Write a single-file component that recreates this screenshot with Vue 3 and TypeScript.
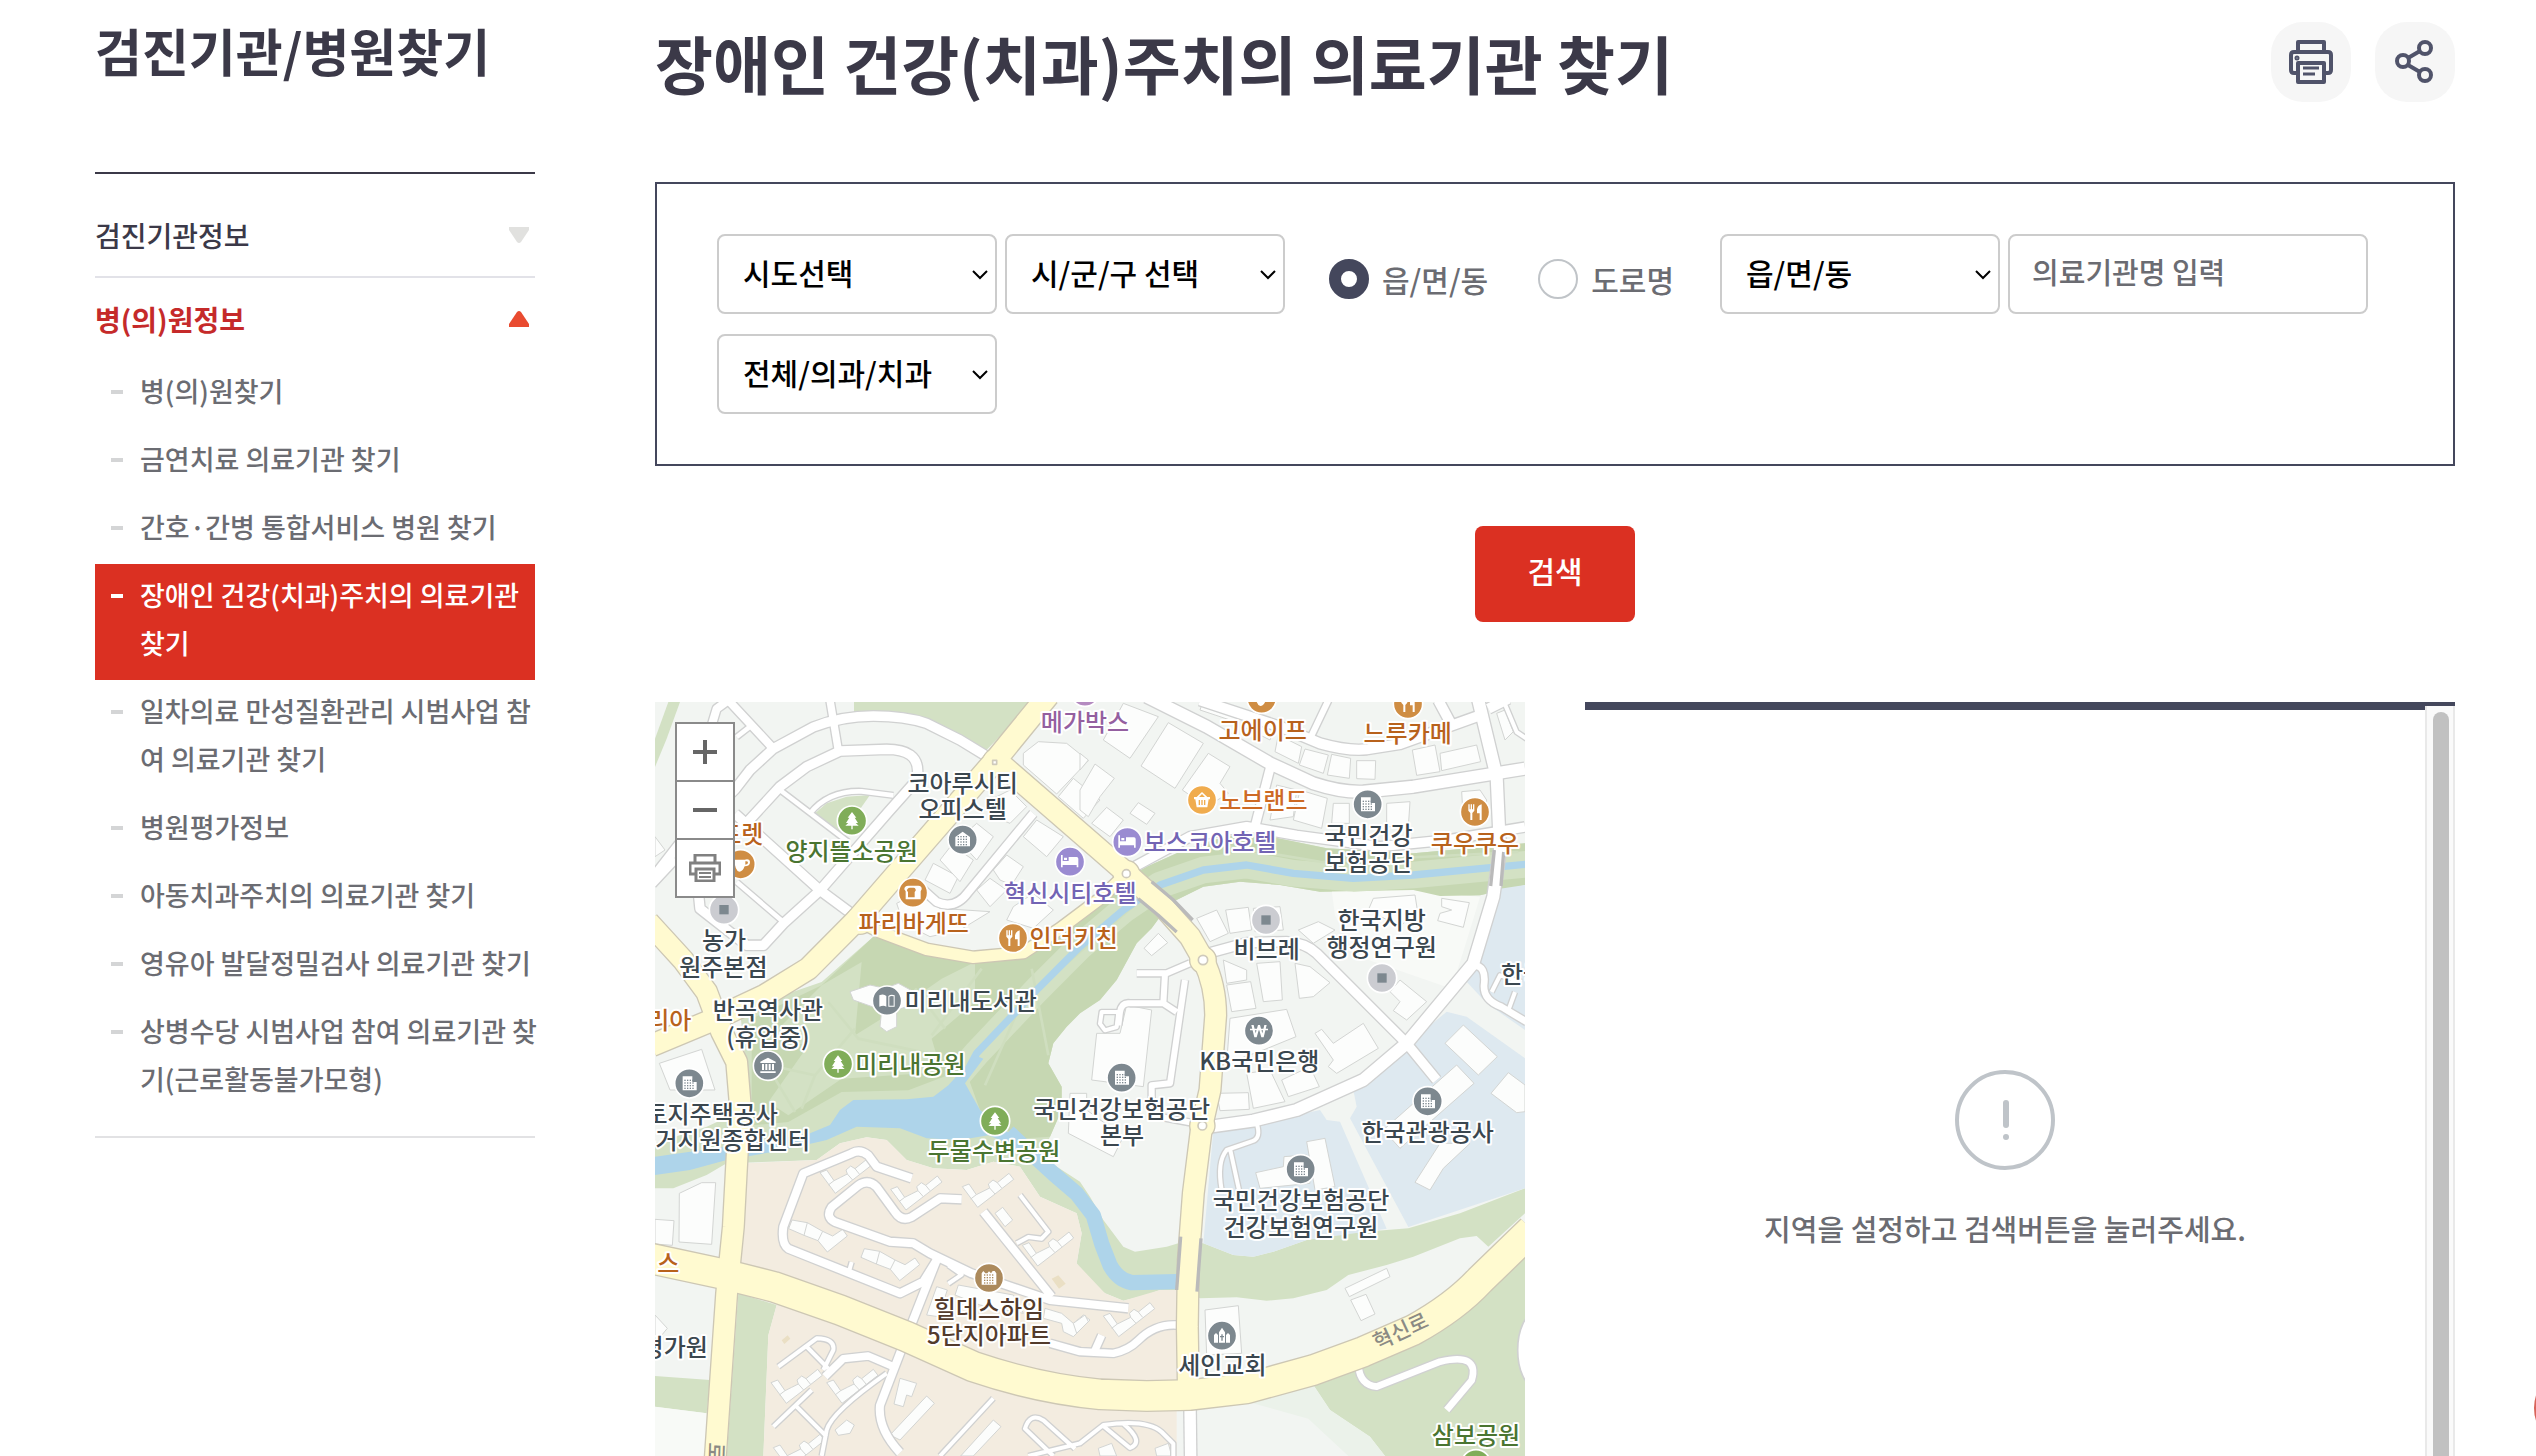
<script setup lang="ts">
import { ref } from 'vue'

interface MenuItem { label: string; active?: boolean }
interface Road { d: string; w: number }
interface Label { t: string; x: number; y: number; c: string; a?: 'start' | 'middle' }
interface Pin { k: string; x: number; y: number; c: string }
interface Block { x: number; y: number; shapes: string[] }

const menu: MenuItem[] = [
  { label: '병(의)원찾기' },
  { label: '금연치료 의료기관 찾기' },
  { label: '간호·간병 통합서비스 병원 찾기' },
  { label: '장애인 건강(치과)주치의 의료기관 찾기', active: true },
  { label: '일차의료 만성질환관리 시범사업 참여 의료기관 찾기' },
  { label: '병원평가정보' },
  { label: '아동치과주치의 의료기관 찾기' },
  { label: '영유아 발달정밀검사 의료기관 찾기' },
  { label: '상병수당 시범사업 참여 의료기관 찾기(근로활동불가모형)' },
]

const addressType = ref('dong')
const keyword = ref('')

const whiteRoads: Road[] = [
  { w: 28, d: 'M0 520L70 430L240 262L285 204L355 140L475 75Q560 42 655 42T815 64L915 114L1005 169' },
  { w: 28, d: 'M-10 545L60 470M250 390L375 254L455 194L555 147L695 142Q790 142 788 210L780 240L700 330L495 565L385 665L325 730H275L135 620L130 570' },
  { w: 22, d: 'M525 -5L550 145' },
  { w: 24, d: 'M170 70L185 20L220 -5L355 140' },
  { w: 14, d: 'M285 74L245 105M245 540L385 660' },
  { w: 28, d: 'M240 335L495 565L610 650' },
  { w: 14, d: 'M375 264L580 420M465 334Q520 265 620 268L715 280' },
  { w: 24, d: 'M1135 334L940 570Q900 625 845 600L795 555' },
  { w: 36, d: 'M1475 -16L1655 74L1845 184L1975 244Q2060 272 2125 269L2275 254L2610 200' },
  { w: 30, d: 'M1635 -5L1875 74L1995 124Q2080 148 2135 142L2235 126L2475 40' },
  { w: 18, d: 'M1970 100L2020 -5' },
  { w: 30, d: 'M2350 -5L2385 60M2500 20L2560 -10' },
  { w: 12, d: 'M2545 -5L2585 90L2615 110' },
  { w: 36, d: 'M2470 -5L2525 224L2535 444L2515 584L2455 784L2255 1024L2125 1134L1925 1224L1795 1256L1665 1274' },
  { w: 26, d: 'M1845 200L1800 374' },
  { w: 28, d: 'M1435 496L1605 404L1775 374L1925 400L2175 434L2375 414L2610 375' },
  { w: 28, d: 'M1665 752L1775 722L1895 719Q1950 722 1985 754L2255 1024L2345 1134' },
  { w: 18, d: 'M1605 784L1535 814H1445M1530 814L1525 904H1425Q1400 900 1395 930L1390 970M1525 904L1565 930M1590 834L1545 1144L1490 1150L1490 1240L1610 1262' },
  { w: 12, d: 'M1340 930H1390L1385 975L1350 985L1335 965ZM2510 870L2535 820L2600 840M2560 925L2580 870' },
  { w: 20, d: 'M2455 790Q2495 790 2487 850Q2485 895 2540 915L2615 960' },
  { w: 12, d: 'M1805 1264Q1820 1310 1790 1318L1715 1344Q1685 1380 1700 1464M1725 1340L1752 1464' },
  { w: 24, d: 'M770 1429L665 1394L640 1360Q615 1340 590 1354L445 1414L385 1574Q378 1625 400 1640L735 1774L805 1739L845 1674' },
  { w: 24, d: 'M920 1492L855 1489L770 1545Q740 1560 720 1530L665 1455Q640 1430 610 1450L530 1515Q510 1545 540 1560L705 1619L775 1624L825 1654L950 1714L1185 1794L1420 1819' },
  { w: 24, d: 'M845 1674L735 1954L675 2110Q668 2180 735 2252' },
  { w: 24, d: 'M985 1529L1190 1784' },
  { w: 12, d: 'M1095 1479L1180 1589L1160 1610L1120 1605L1085 1624M590 1680L580 1715M880 1690L920 1718L880 1745' },
  { w: 22, d: 'M510 2024L565 1970L640 1962L715 1994' },
  { w: 12, d: 'M370 1994L485 1909Q540 1910 535 1944L505 2004M455 1934L520 2000M695 2014Q530 2130 515 2184L500 2262M355 2174L470 2064M425 2114L515 2204M855 2262L1015 2089' },
  { w: 22, d: 'M1185 1924L1275 1949L1375 1954Q1420 1945 1450 1915Q1500 1865 1565 1869M1320 1945L1340 1900' },
  { w: 12, d: 'M1120 2262L1275 2224L1345 2169Q1475 2150 1520 2190L1555 2225V2262M1345 2172L1425 2238Q1470 2220 1405 2165M1195 2262L1110 2180Q1125 2130 1165 2155L1260 2240' },
  { w: 34, d: 'M1605 2110L1607 2270' },
  { w: 20, d: 'M2110 1990Q2115 2050 2165 2054L2355 1979Q2475 1950 2450 2035L2375 2124' },
]

const yellowRoads: Road[] = [
  { w: 64, d: 'M1180 -20L1025 170L605 654L460 800L330 880L170 955L-10 1030' },
  { w: 34, d: 'M605 654L675 690L815 742L955 766L1105 752L1215 680L1335 590L1415 514' },
  { w: 62, d: 'M1025 175L1335 444L1415 514L1525 614L1605 704L1645 774Q1682 850 1682 940L1665 1164L1640 1274L1615 1474L1600 1674L1597 1874L1600 2060' },
  { w: 62, d: 'M-20 660L85 775L155 870L200 990L245 1080L255 1200L235 1574L215 1774L180 2280' },
  { w: 88, d: 'M-20 1668L195 1714L355 1754L555 1824L755 1904L955 1994Q1150 2060 1335 2077L1475 2082L1605 2079L1775 2059L1975 2004L2125 1949L2275 1884Q2400 1815 2475 1734L2630 1584' },
]

const blocks: Block[] = [
  { x: -45, y: -36, shapes: [
    '1150,190 1195,155 1280,160 1345,212 1250,312 1150,225', '1255,320 1300,265 1380,330 1330,385',
    '855,570 880,520 955,560 930,610', '900,510 935,465 1000,510 960,575', '955,450 1010,400 1060,440 1010,510',
    '1050,330 1110,300 1160,350 1110,400 1060,380', '1060,540 1100,495 1150,530 1115,585 1080,570',
    '1010,600 1050,565 1100,600 1050,650', '1150,440 1190,390 1270,440 1220,500', '1100,690 1120,650 1180,610 1240,660 1180,715',
    '770,640 830,610 900,655 1050,665 960,720 870,740 790,700', '58,1120 185,1078 225,1200 90,1200', '45,440 75,480 45,500',
    '630,905 690,885 735,895 775,880 830,910 830,940 770,960 770,1010 740,1025 720,1010 725,960 640,930',
  ] },
  { x: 1275, y: -36, shapes: [
    '70,150 130,40 235,80 150,205', '265,98 370,160 285,295 183,228', '385,190 450,230 420,280 445,310 380,350 307,300',
    '370,30 480,75 465,95 360,60', '500,80 580,120 570,150 490,110', '595,135 665,170 655,220 585,185',
    '675,177 745,195 730,250 658,225', '755,193 812,205 808,265 742,255', '830,212 887,212 885,268 830,266',
    '997,180 1065,165 1080,245 1010,256', '1080,190 1190,165 1202,215 1085,242', '1250,70 1275,60 1300,125 1275,150',
    '150,370 175,338 225,370 200,403', '35,400 80,352 130,390 90,440', '0,190 25,210 0,240',
    '0,300 45,222 103,265 60,320 25,380 0,360', '590,285 650,300 640,380 570,390', '660,300 742,325 725,415 640,390',
    '760,340 808,340 808,400 755,400', '920,340 990,335 985,410 920,410', '1145,305 1200,300 1220,330 1215,395 1150,390',
    '880,625 1005,615 1012,660 960,710 865,660', '1085,625 1168,638 1150,712 1073,692 1080,670 1115,660 1085,650',
    '350,685 410,660 445,730 390,755', '437,660 505,652 515,720 450,730', '520,655 600,650 610,720 525,725',
    '655,720 715,695 765,720 700,760', '192,775 235,730 263,758 215,797', '430,810 500,840 500,870 440,880',
    '440,885 512,875 528,955 455,965', '530,820 600,815 607,930 550,935', '645,820 690,830 750,878 700,920 658,925',
    '450,985 620,958 648,1040 550,1080 440,1120', '705,1030 725,1018 760,1060 850,1000 895,1075 770,1150 745,1130 760,1110',
    '960,870 1040,935 980,990 940,962 960,935 930,905', '1150,1005 1252,1100 1195,1155 1095,1060',
    '140,945 215,960 190,1190 35,1170 50,1030 120,1030',
  ] },
  { x: -45, y: 1074, shapes: [
    '118,400 185,368 227,368 215,553 117,546', '45,478 102,482 97,556 45,552', '45,765 82,805 45,850',
    '780,955 830,970 815,1010 800,1005 790,1040 762,1032', '585,1110 620,1080 643,1095 630,1120 595,1126',
    '1065,460 1088,442 1118,480 1095,500', '860,765 890,680 922,690 895,770', '955,675 1120,705 1150,760 1020,735 945,705',
    '750,1125 860,1008 883,1030 780,1140', '962,1188 1060,1080 1083,1100 1000,1188', '1215,745 1265,760 1300,790 1330,765 1350,780 1300,830 1270,815 1265,790 1210,775',
  ] },
  { x: 1275, y: 1074, shapes: [
    '1130,15 1182,70 960,265 910,210', '1285,38 1335,75 1335,155 1310,158 1233,100', '1080,250 1170,250 1090,325 1050,390 1005,367',
    '680,245 735,235 765,380 705,390', '527,338 610,320 612,290 680,285 690,370 540,385', '410,100 505,98 508,148 420,152',
    '500,40 570,30 615,125 520,145', '605,60 690,20 718,80 625,110', '795,685 920,625 930,650 808,710',
    '812,720 858,703 885,762 843,782', '375,750 475,737 485,880 380,885', '-30,100 20,100 20,150 130,230 100,290 -35,220',
    '55,1165 95,1150 110,1188 60,1188', '225,1165 265,1150 275,1188 230,1188', '-20,790 15,765 25,785 -10,820',
  ] },
]

const clusters: [number, number][] = [
  [495, 1404], [707, 1454], [922, 1446], [1102, 1622], [348, 2034], [515, 2034], [355, 2229], [1345, 1834],
]
const terraces: [number, number][] = [[405, 1554], [622, 1640]]

const ink = '#3b474f'
const leaf = '#4a7531'
const rust = '#b8621c'
const plum = '#7264b4'

const labels: Label[] = [
  { t: '메가박스', x: 1290, y: 61, c: '#945fa0' },
  { t: '코아루시티', x: 923, y: 246, c: ink }, { t: '오피스텔', x: 923, y: 324, c: ink },
  { t: '양지뜰소공원', x: 590, y: 449, c: leaf }, { t: '드렛', x: 259, y: 399, c: rust },
  { t: '파리바게뜨', x: 776, y: 664, c: rust }, { t: '혁신시티호텔', x: 1246, y: 574, c: plum },
  { t: '인더키친', x: 1256, y: 711, c: rust }, { t: '농가', x: 207, y: 716, c: ink },
  { t: '원주본점', x: 205, y: 796, c: ink }, { t: '반곡역사관', x: 339, y: 926, c: ink },
  { t: '(휴업중)', x: 339, y: 1006, c: ink }, { t: '리아', x: 43, y: 956, c: rust },
  { t: '미리내도서관', x: 947, y: 899, c: ink }, { t: '미리내공원', x: 766, y: 1088, c: leaf },
  { t: '토지주택공사', x: 170, y: 1237, c: ink }, { t: '주거지원종합센터', x: 200, y: 1317, c: ink },
  { t: '두물수변공원', x: 1017, y: 1349, c: leaf }, { t: '국민건강보험공단', x: 1400, y: 1222, c: ink },
  { t: '본부', x: 1401, y: 1301, c: ink }, { t: '스', x: 40, y: 1686, c: rust },
  { t: '힐데스하임', x: 1002, y: 1822, c: '#533b2c' }, { t: '5단지아파트', x: 1002, y: 1902, c: '#533b2c' },
  { t: '평가원', x: 59, y: 1936, c: ink }, { t: '고에이프', x: 1823, y: 86, c: rust },
  { t: '느루카메', x: 2258, y: 96, c: rust }, { t: '노브랜드', x: 1825, y: 296, c: '#cd6a25' },
  { t: '보스코아호텔', x: 1665, y: 421, c: plum }, { t: '국민건강', x: 2140, y: 402, c: ink },
  { t: '보험공단', x: 2140, y: 481, c: ink }, { t: '쿠우쿠우', x: 2460, y: 424, c: rust },
  { t: '비브레', x: 1835, y: 744, c: ink }, { t: '한국지방', x: 2180, y: 657, c: ink },
  { t: '행정연구원', x: 2180, y: 737, c: ink }, { t: '한국', x: 2538, y: 819, c: ink, a: 'start' },
  { t: 'KB국민은행', x: 1813, y: 1079, c: ink }, { t: '국민건강보험공단', x: 1938, y: 1497, c: ink },
  { t: '건강보험연구원', x: 1938, y: 1576, c: ink }, { t: '한국관광공사', x: 2318, y: 1292, c: ink },
  { t: '세인교회', x: 1702, y: 1991, c: ink }, { t: '삼보공원', x: 2463, y: 2201, c: leaf },
]

const slate = '#7d888f'
const pins: Pin[] = [
  { k: 'tree', x: 591, y: 356, c: '#80ad59' }, { k: 'tree', x: 549, y: 1086, c: '#80ad59' },
  { k: 'tree', x: 1020, y: 1257, c: '#80ad59' }, { k: 'tree', x: 2463, y: 2287, c: '#80ad59' },
  { k: 'house', x: 923, y: 413, c: slate }, { k: 'office', x: 2138, y: 307, c: slate },
  { k: 'office', x: 103, y: 1144, c: slate }, { k: 'office', x: 1400, y: 1127, c: slate },
  { k: 'office', x: 2318, y: 1198, c: slate }, { k: 'office', x: 1937, y: 1402, c: slate },
  { k: 'bed', x: 1245, y: 479, c: '#9a8bd1' }, { k: 'bed', x: 1417, y: 420, c: '#9a8bd1' },
  { k: 'bread', x: 774, y: 572, c: '#cf8d43' }, { k: 'fork', x: 1074, y: 708, c: '#cf8d43' },
  { k: 'fork', x: 2460, y: 330, c: '#cf8d43' }, { k: 'fork', x: 2259, y: 6, c: '#cf8d43' },
  { k: 'cup', x: 257, y: 487, c: '#cf8d43' }, { k: 'cup', x: 1820, y: -10, c: '#cf8d43' },
  { k: 'none', x: 1290, y: -31, c: '#b48bc0' }, { k: 'dot', x: 207, y: 623, c: '#cbccd1' },
  { k: 'dot', x: 1833, y: 654, c: '#cbccd1' }, { k: 'dot', x: 2181, y: 828, c: '#cbccd1' },
  { k: 'book', x: 696, y: 896, c: slate }, { k: 'museum', x: 339, y: 1091, c: slate },
  { k: 'basket', x: 1641, y: 294, c: '#f0ac4e' }, { k: 'won', x: 1812, y: 986, c: slate },
  { k: 'apartment', x: 1002, y: 1728, c: '#ac8a5c' }, { k: 'church', x: 1701, y: 1901, c: slate },
]

const glyphs: Record<string, string> = {
  none: '',
  dot: '',
  tree: 'M0-26L13-9H8L18 7H11L20 15H2V26H-2V15H-20L-11 7H-18L-8-9H-13Z',
  house: 'M0-24L22-8V20H-22V-8Z',
  office: 'M-20-21H9V-4H22V21H-20Z',
  bed: 'M-27-20H-22V-2H-4V-14H20Q25-14 25-9V17H20V10H-22V17H-27ZM-18-12H-9V-5H-18Z',
  bread: 'M-14-21H16Q27-21 26-10L23-4V20H-22V-4L-26-10Q-26-21-14-21Z',
  fork: 'M-20-23H-16V-8H-13V-23H-9V-8H-6V-23H-2V-4L-8 3V24H-14V3L-20-4ZM20-23V24H14V4H6V-8Q8-20 20-23Z',
  cup: 'M-18-14H12Q28-18 28-6Q28 6 12 6Q6 22-4 22Q-18 18-18-14ZM14-9V1Q22 0 22-5T14-9Z',
  book: 'M-23-16Q-10-22-2-14V18Q-10 12-23 18ZM23-16V18H4V-14Q12-20 23-16ZM7-12V15H20V-13Q12-16 7-12Z',
  museum: 'M0-24L23-12V-8H-23V-12ZM-18-5H-12V13H-18ZM-8-5H-2V13H-8ZM2-5H8V13H2ZM12-5H18V13H12ZM-23 17H23V22H-23Z',
  basket: 'M-24-9H-16L0-24L16-9H24V-2H20L16 22H-16L-20-2H-24ZM-9-9H9L0-18ZM-10 0H-6V15H-10ZM-2 0H2V15H-2ZM6 0H10V15H6Z',
  won: 'M-23-17H-16L-10 8L-3-17H3L10 8L16-17H23L14 20H7L0-4L-7 20H-14ZM-27-6H27V-1H-27Z',
  apartment: 'M-22-14L-17-21L-11-14L-5-14L0-20L6-14L11-21L17-21L22-14V20H-22Z',
  church: 'M0-24L9-10V21H-9V-10ZM-24-2L-18-8L-12-2V21H-24ZM12-2L18-8L24-2V21H12ZM-2-4V1H-6V5H-2V15H2V5H6V1H2V-4Z',
}
const windowed = ['house', 'office', 'apartment']
const windowDots: [number, number][] = []
for (const y of [-11, -3, 5, 13]) for (const x of [-15, -7, 1, 9]) windowDots.push([x, y])
</script>

<template>
  <div class="page">
    <aside class="side">
      <h2 class="side-title">검진기관/병원찾기</h2>
      <nav class="side-nav">
        <a href="#" class="group">검진기관정보
          <svg class="tri" viewBox="0 0 20 16" aria-hidden="true"><path d="M0 0H20V3L12 15Q10 17 8 15L0 3Z" fill="#e1e1df" /></svg>
        </a>
        <a href="#" class="group open">병(의)원정보
          <svg class="tri" viewBox="0 0 20 16" aria-hidden="true"><path d="M0 16H20V13L12 1Q10-1 8 1L0 13Z" fill="#e94b30" /></svg>
        </a>
        <ul class="sub">
          <li v-for="m in menu" :key="m.label">
            <a href="#" class="sub-link" :class="{ active: m.active }"><span>{{ m.label }}</span></a>
          </li>
        </ul>
      </nav>
    </aside>

    <main class="main">
      <header class="head">
        <h1 class="title">장애인 건강(치과)주치의 의료기관 찾기</h1>
        <div class="tools">
          <button type="button" class="tool" aria-label="인쇄">
            <svg width="44" height="44" viewBox="0 0 44 44" fill="none" stroke="#50536a" stroke-width="4" stroke-linejoin="round">
              <path d="M9 12V2H35V12M9 33H5Q2 33 2 30V15Q2 12 5 12H39Q42 12 42 15V30Q42 33 39 33H35M9 23H35V42H9Z" />
              <path d="M14 28H30M14 34H26" stroke-width="3" /><circle cx="8" cy="18" r="1" stroke-width="3" />
            </svg>
          </button>
          <button type="button" class="tool" aria-label="공유">
            <svg width="44" height="44" viewBox="0 0 44 44" fill="none" stroke="#50536a" stroke-width="4">
              <circle cx="10" cy="21" r="6" /><circle cx="32" cy="8" r="6" /><circle cx="32" cy="35" r="6" />
              <path d="M15 18L27 11M15 25L27 32" />
            </svg>
          </button>
        </div>
      </header>

      <form class="search" @submit.prevent>
        <div class="filters">
          <div class="pick">
            <select aria-label="시도"><option>시도선택</option></select>
            <svg viewBox="0 0 16 10" aria-hidden="true"><path d="M1 1L8 8L15 1" /></svg>
          </div>
          <div class="pick">
            <select aria-label="시/군/구"><option>시/군/구 선택</option></select>
            <svg viewBox="0 0 16 10" aria-hidden="true"><path d="M1 1L8 8L15 1" /></svg>
          </div>
          <div class="radios">
            <label class="radio"><input v-model="addressType" type="radio" name="address" value="dong">읍/면/동</label>
            <label class="radio"><input v-model="addressType" type="radio" name="address" value="road">도로명</label>
          </div>
          <div class="pick">
            <select aria-label="읍/면/동"><option>읍/면/동</option></select>
            <svg viewBox="0 0 16 10" aria-hidden="true"><path d="M1 1L8 8L15 1" /></svg>
          </div>
          <input v-model="keyword" class="keyword" type="text" aria-label="의료기관명" placeholder="의료기관명 입력">
          <div class="pick">
            <select aria-label="진료 구분"><option>전체/의과/치과</option></select>
            <svg viewBox="0 0 16 10" aria-hidden="true"><path d="M1 1L8 8L15 1" /></svg>
          </div>
        </div>
        <button type="submit" class="submit">검색</button>
      </form>

      <div class="result">
        <section class="map" aria-label="지도">
          <svg class="canvas" viewBox="0 0 2610 2262" preserveAspectRatio="xMinYMin slice">
            <rect width="2610" height="2262" fill="#f2f5f2" />
            <g fill="#d3e1c4">
              <path d="M597 0H1135L985 154L890 94L795 59L655 44L597 30Z" />
              <path d="M40 0H75L35 110L0 195V110Z" />
              <path d="M480 334L515 304L575 284L645 279L560 400L515 368Z" />
              <path d="M655 704L815 754L975 779L1135 744L1255 664L1335 604L1405 534L1475 494L1575 449L1675 414L1780 390L1895 414L2015 439L2275 454L2610 424V549L2475 580L2355 582L2275 564L1995 569L1875 549L1755 539L1645 554L1545 604L1490 679L1445 724L1385 834L1335 894L1275 934L1235 974L1195 1024L1180 1084L1220 1154V1224L1185 1304L1155 1364L1215 1400L1275 1439L1305 1484L1345 1554L1405 1634L1440 1649L1535 1634L1575 1622L1645 1624L1735 1659L1795 1664L1855 1649L1955 1614L2075 1594L2260 1579L2415 1534L2610 1459V1534L2500 1634L2465 1602L2415 1609L2275 1664L2195 1689L2080 1719L2015 1764L1915 1789L1835 1796L1745 1786L1635 1789L1565 1764L1515 1764L1475 1779L1405 1796L1350 1774L1285 1724L1265 1684L1280 1594L1265 1534L1155 1484L1095 1394L1015 1379L935 1404L835 1399L755 1374L695 1314L635 1306L555 1324L485 1374L215 1384L155 1419L55 1459H0V1324L155 1274L285 1214L255 924L500 840Z" />
              <path d="M0 2022L165 2034L155 2134L0 2114ZM250 1774L365 1809L340 1900L325 2262H215Z" />
              <path d="M1975 2049L2105 2004L2610 1664V2262H2190L2145 2204L2025 2124Z" />
            </g>
            <path fill="#ebf2ea" d="M1780 2100L1975 2049L2025 2124L2145 2204L2190 2262H2080L1960 2150Z" />
            <path fill="#f8faf7" d="M0 2114L155 2134L150 2262H0ZM2030 564L2275 564L2475 585L2440 700L2390 860L2100 760L2040 640Z" />
            <path fill="#c6d7b2" d="M290 950L500 850L655 704L815 754L975 779L1135 744L1255 664L1335 604L1405 534L1475 494L1575 449L1675 414L1780 390L1895 414L2015 439L2275 454L2610 424V549L2475 580L2355 582L2275 564L1995 569L1875 549L1755 539L1645 554L1545 604L1490 679L1445 724L1385 834L1335 894L1275 934L1235 974L1195 1024L1180 1084L1220 1154V1224L1185 1304L1090 1310L975 1224L930 1100L760 1165L560 1170L400 1260L290 1270Z" />
            <path fill="none" stroke="#d3e1c4" stroke-width="80" stroke-linejoin="round" d="M2620 486L2275 519L2095 529L1915 514L1775 489L1645 504L1515 549L1405 624L1275 734L1145 864L965 1054L900 1130" />
            <path fill="#d3e1c4" d="M500 850L620 780L600 1000L760 900L860 830L960 780V900L830 1010L860 1110L560 1130L400 1240L340 1200L460 1030L340 1010Z" />
            <path fill="none" stroke="#cfdebf" stroke-width="8" d="M870 980L780 860M830 1000L980 800M300 1080L480 1120L600 980M480 1120L440 1220M360 1130L420 1230M520 900L610 1010L850 1060M1130 800L1180 1060M990 1150L1100 900L1450 600M1700 430L2000 480L2590 450" />
            <path fill="none" stroke="#aed4ea" stroke-width="22" stroke-linejoin="round" d="M2620 486L2275 519L2095 529L1915 514L1775 489L1645 504L1515 549L1405 624L1275 734L1145 864L965 1054L930 1120" />
            <path fill="#aed4ea" d="M880 1150L935 1090L960 1060L985 1070L930 1144L975 1224L1075 1304L1140 1350L1100 1340L1000 1300L915 1314L815 1309L735 1279L605 1274L515 1314L385 1344L215 1374L105 1404L0 1419V1364L285 1324L465 1294L525 1269L555 1224L595 1194L755 1192L835 1184Z" />
            <path fill="none" stroke="#aed4ea" stroke-width="46" stroke-linejoin="round" d="M1060 1290L1140 1365L1195 1415L1265 1475L1315 1540L1340 1625L1365 1690Q1390 1735 1430 1742L1565 1739" />
            <path fill="#f3ece0" d="M275 1384L485 1374L555 1324L635 1306L695 1314L755 1374L835 1399L935 1404L1015 1379L1095 1394L1155 1484L1265 1534L1280 1594L1265 1684L1350 1774L1405 1796L1515 1764H1565V2262H325L340 1900L365 1809L250 1680Z" />
            <g fill="#dee9f0">
              <path d="M1675 1284L1815 1264L1995 1224L2015 1254L2055 1259L2195 1580L1955 1614L1855 1649L1795 1664L1735 1659L1645 1624Z" />
              <path d="M2375 929L2435 944L2610 1069V1459L2260 1575L2085 1249L2105 1214L2095 1164Z" />
              <path d="M2510 564L2610 549V984L2495 904L2435 839Z" />
            </g>

            <g fill="#fcfdfc" stroke="#d3d5d3" stroke-width="3">
              <g v-for="(b, i) in blocks" :key="i" :transform="`translate(${b.x} ${b.y})`">
                <polygon v-for="s in b.shapes" :key="s" :points="s" />
              </g>
              <path v-for="(c, i) in clusters" :key="'c' + i" :transform="`translate(${c[0]} ${c[1]})`" d="M0 8L20 0L42 32L62 22L82 12L78 0L92-12L105-4L140-32L154-14L98 30L46 70Z M42 32L25 45M82 12L98 30M105-4L118 12" />
              <path v-for="(c, i) in terraces" :key="'t' + i" :transform="`translate(${c[0]} ${c[1]})`" d="M6 0L52 8L98 34L128 48L158 28L172 48L112 96L84 62L42 46L-4 26ZM52 8L42 46M98 34L84 62" />
            </g>
            <path d="M1210 1720L1232 1745L1212 1760L1190 1730ZM380 1915L398 1900L406 1910L388 1926Z" fill="#eadfc4" />

            <g fill="none" stroke-linejoin="round">
              <path v-for="r in whiteRoads" :key="r.d" :d="r.d" :stroke-width="r.w + 8" stroke="#d0d1d1" />
              <path v-for="r in whiteRoads" :key="'f' + r.d" :d="r.d" :stroke-width="r.w" stroke="#ffffff" />
              <path v-for="r in yellowRoads" :key="r.d" :d="r.d" :stroke-width="r.w + 8" stroke="#cdc7b4" />
              <g fill="#fffad0" stroke="#cdc7b4" stroke-width="4">
                <circle cx="1025" cy="180" r="42" /><circle cx="615" cy="655" r="42" /><circle cx="1414" cy="515" r="40" />
                <circle cx="1644" cy="774" r="40" /><circle cx="1642" cy="1271" r="38" />
              </g>
              <path v-for="r in yellowRoads" :key="'f' + r.d" :d="r.d" :stroke-width="r.w" stroke="#fffad0" />
              <path stroke="#bababa" stroke-width="10" d="M1490 539L1555 594L1613 654M1450 590L1510 640L1565 690M2518 444L2507 552M2546 450L2538 552M1577 1604L1565 1764M1638 1609L1626 1769" />
              <g fill="#ffffff" stroke="#cfcabb" stroke-width="5">
                <circle cx="1414" cy="515" r="12" /><circle cx="1644" cy="774" r="14" /><circle cx="1642" cy="1271" r="13" />
                <rect x="1013" y="175" width="12" height="12" />
              </g>
            </g>
            <ellipse cx="2640" cy="1944" rx="52" ry="110" fill="#fff" stroke="#d0d1d1" stroke-width="5" />

            <g v-for="(p, i) in pins" :key="'p' + i" :transform="`translate(${p.x} ${p.y})`">
              <circle r="44" :fill="p.c" stroke="#fff" stroke-width="5" />
              <rect v-if="p.k === 'dot'" x="-14" y="-14" width="28" height="28" fill="#7d888f" />
              <path v-else :d="glyphs[p.k]" fill="#fff" :fill-rule="p.k === 'won' ? 'nonzero' : 'evenodd'" />
              <path v-if="p.k === 'bread'" d="M-9-15H2Q9-14 8-6L5-2V14H-15V-2L-18-6Q-18-14-9-15Z" :fill="p.c" />
              <template v-if="windowed.includes(p.k)">
                <rect v-for="(w, j) in windowDots" :key="j" :x="w[0]" :y="w[1]" width="4" height="4" :fill="p.c" />
              </template>
            </g>

            <g class="road-name" text-anchor="middle">
              <text transform="translate(2246 1908) rotate(-25)">혁신로</text>
              <text transform="translate(160 2250) rotate(92)">로</text>
            </g>
            <g class="place">
              <text v-for="(l, i) in labels" :key="'l' + i" :x="l.x" :y="l.y + 25" :fill="l.c" :text-anchor="l.a ?? 'middle'">{{ l.t }}</text>
            </g>
          </svg>
          <div class="zoom">
            <button type="button" aria-label="확대"><svg width="24" height="24" viewBox="0 0 24 24"><path d="M12 0V24M0 12H24" stroke="#666" stroke-width="4" /></svg></button>
            <button type="button" aria-label="축소"><svg width="24" height="24" viewBox="0 0 24 24"><path d="M0 12H24" stroke="#666" stroke-width="4" /></svg></button>
            <button type="button" aria-label="지도 인쇄">
              <svg width="32" height="28" viewBox="0 0 32 28" fill="none" stroke="#808080" stroke-width="3">
                <path d="M6 9V1H26V9M7 20H1V9H31V20H25M7 15H25V27H7Z" /><path d="M10 19H22M10 23H22" stroke-width="2" />
              </svg>
            </button>
          </div>
        </section>

        <section class="list">
          <div class="empty">
            <svg width="100" height="100" viewBox="0 0 100 100" fill="none" stroke="#bfc4c9" stroke-linecap="round" aria-hidden="true">
              <circle cx="50" cy="50" r="48" stroke-width="4" />
              <path d="M51 33V55" stroke-width="6" /><path d="M51 67V67" stroke-width="6" />
            </svg>
            <p>지역을 설정하고 검색버튼을 눌러주세요.</p>
          </div>
          <div class="track"><div class="thumb"></div></div>
        </section>
      </div>
    </main>
    <button type="button" class="quick" aria-label="빠른 메뉴"></button>
  </div>
</template>

<style>
body { background: #fff; overflow: hidden; }
</style>

<style scoped>
* { box-sizing: border-box; }
.page {
  position: relative;
  display: grid;
  grid-template-columns: 440px minmax(0, 1fr);
  column-gap: 120px;
  padding: 0 81px 0 95px;
  overflow: hidden;
  font-family: "Noto Sans CJK KR", "Noto Sans", sans-serif;
  font-size: 30px;
  font-weight: 500;
  color: #6b6c72;
}
h1, h2, p, ul { margin: 0; padding: 0; }
a { color: inherit; text-decoration: none; }
button, input, select { font: inherit; }
button { padding: 0; cursor: pointer; }

.side-title {
  height: 172px;
  padding-top: 14px;
  font-size: 51px;
  line-height: 72px;
  font-weight: 700;
  color: #3b3948;
  white-space: nowrap;
}
.side-nav { border-top: 2px solid #3b3948; border-bottom: 2px solid #e2e2e4; padding: 20px 0; }
.group {
  display: flex;
  align-items: center;
  justify-content: space-between;
  height: 82px;
  padding-right: 6px;
  font-size: 28px;
  color: #3b3948;
}
.group + .group { border-top: 2px solid #e2e2e8; height: 84px; }
.group.open { color: #c52a2a; font-weight: 700; }
.tri { width: 20px; height: 16px; }
.sub { list-style: none; font-size: 27px; line-height: 48px; }
.sub-link { display: block; position: relative; padding: 7px 0 13px 45px; }
.sub-link span { display: block; margin-right: -4px; }
.sub-link::before {
  content: "";
  position: absolute;
  left: 16px;
  top: 30px;
  width: 12px;
  height: 4px;
  background: #d4d5d6;
}
.sub-link.active { background: #db3022; color: #fff; }
.sub-link.active::before { background: #fff; }

.head { display: flex; justify-content: space-between; height: 182px; padding-top: 22px; }
.title { font-size: 63px; line-height: 80px; font-weight: 700; color: #3b3948; white-space: nowrap; }
.tools { display: flex; gap: 24px; }
.tool {
  display: flex;
  align-items: center;
  justify-content: center;
  width: 80px;
  height: 80px;
  border: 0;
  border-radius: 32px;
  background: #f6f6f6;
}

.search { display: flex; flex-direction: column; align-items: center; }
.filters {
  display: flex;
  flex-wrap: wrap;
  gap: 20px 8px;
  width: 100%;
  padding: 50px 60px;
  border: 2px solid #44475c;
}
.pick { position: relative; width: 280px; height: 80px; }
.pick select {
  appearance: none;
  width: 100%;
  height: 100%;
  padding: 0 30px 4px 24px;
  border: 2px solid #ccc;
  border-radius: 8px;
  background: #fff;
  color: #000;
}
.pick svg {
  position: absolute;
  right: 9px;
  top: 36px;
  width: 16px;
  height: 10px;
  fill: none;
  stroke: #000;
  stroke-width: 2;
  pointer-events: none;
}
.radios { display: flex; align-items: center; gap: 50px; margin: 0 38px 0 36px; padding-top: 10px; }
.radio { display: flex; align-items: center; gap: 13px; line-height: 40px; }
.radio input {
  appearance: none;
  width: 40px;
  height: 40px;
  margin: 0;
  border: 2px solid #c0c4c8;
  border-radius: 50%;
  background: #fff;
}
.radio input:checked { border: 12px solid #44475c; }
.keyword {
  width: 360px;
  height: 80px;
  padding: 0 22px 6px;
  border: 2px solid #ccc;
  border-radius: 8px;
  font-size: 29px;
  color: #000;
}
.keyword::placeholder { color: #6b6c72; opacity: 1; }
.submit {
  width: 160px;
  height: 96px;
  margin: 60px 0 80px;
  padding-bottom: 8px;
  border: 0;
  border-radius: 8px;
  background: #db3022;
  color: #fff;
}

.result { display: grid; grid-template-columns: 1fr 1fr; column-gap: 60px; }
.map { position: relative; aspect-ratio: 870 / 754; overflow: hidden; }
.canvas { display: block; width: 100%; height: 100%; }
.place text {
  font-size: 72px;
  stroke: #fff;
  stroke-width: 12px;
  stroke-linejoin: round;
  paint-order: stroke;
}
.road-name text { font-size: 63px; fill: #8b8a84; }
.zoom {
  position: absolute;
  left: 20px;
  top: 20px;
  display: grid;
  gap: 2px;
  padding: 2px;
  background: #8a8a8a;
}
.zoom button {
  display: flex;
  align-items: center;
  justify-content: center;
  width: 56px;
  height: 56px;
  border: 0;
  background: #fff;
}
.list { position: relative; border-top: 8px solid #44475c; padding-right: 30px; }
.empty { display: flex; flex-direction: column; align-items: center; padding-top: 360px; }
.empty p { margin-top: 36px; font-size: 29px; line-height: 44px; }
.track {
  position: absolute;
  top: -4px;
  right: 0;
  bottom: 0;
  width: 30px;
  padding: 6px 4px 0 6px;
  border: solid #e9e9e9;
  border-width: 0 2px;
  background: #fafafa;
}
.thumb { width: 16px; height: 100%; border-radius: 8px 8px 0 0; background: #c1c1c1; }
.quick {
  position: absolute;
  right: -78px;
  bottom: 8px;
  width: 80px;
  height: 80px;
  border: 2px solid #d8645a;
  border-radius: 50%;
  background: #fff;
}
</style>
